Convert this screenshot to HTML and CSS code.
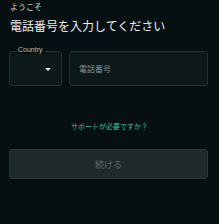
FILE: index.html
```html
<!DOCTYPE html>
<html lang="ja">
<head>
<meta charset="utf-8">
<link rel="stylesheet" href="styles.css">
</head>
<body>
<main class="page">
  <div class="welcome">ようこそ</div>
  <h1 class="title">電話番号を入力してください</h1>
  <div class="fields">
    <div class="field country">
      <span class="label">Country</span>
      <svg class="arrow" width="6" height="3" viewBox="0 0 6 3"><path d="M0 0H6L3 3Z" fill="#e6e6e6"/></svg>
    </div>
    <div class="field phone">
      <span class="placeholder">電話番号</span>
    </div>
  </div>
  <a class="support">サポートが必要ですか？</a>
  <button class="continue">続ける</button>
</main>
</body>
</html>
```
FILE: styles.css
```css
html, body {
  margin: 0;
  padding: 0;
  background: #061012;
  width: 219px;
  height: 224px;
  overflow: hidden;
}
.page {
  display: flex;
  flex-direction: column;
  padding: 2px 11px 0 9px;
  font-family: "Noto Sans CJK JP", "Liberation Sans", sans-serif;
}
.welcome {
  font-size: 8px;
  line-height: 10px;
  color: #d8dcdc;
  margin-left: 1px;
}
.title {
  margin: 7px 0 0 1px;
  font-size: 12px;
  line-height: 14px;
  font-weight: 400;
  color: #eceeee;
}
.fields {
  display: flex;
  gap: 7px;
  margin-top: 18px;
}
.field {
  position: relative;
  height: 33px;
  border: 1px solid #252f2f;
  border-radius: 3px;
  background: #0d1818;
  box-sizing: content-box;
  display: flex;
  align-items: center;
}
.country {
  width: 51px;
  justify-content: flex-end;
}
.arrow {
  margin-right: 10px;
  margin-top: 1px;
}
.label {
  position: absolute;
  left: 6px;
  top: -6px;
  padding: 0 2px;
  background: #061012;
  font-family: "Liberation Sans", sans-serif;
  font-size: 7px;
  line-height: 8px;
  color: #b8c0c0;
}
.phone {
  flex: 1;
}
.placeholder {
  margin-left: 9px;
  font-size: 8px;
  color: #8a9494;
}
.support {
  align-self: center;
  margin-top: 35px;
  font-size: 7px;
  line-height: 10px;
  color: #3fbf9f;
  margin-left: 2px;
}
.continue {
  margin-top: 18px;
  height: 30px;
  border: 1px solid #2a3635;
  border-radius: 3px;
  background: #1e2a29;
  color: #5e6b6a;
  font-family: "Noto Sans CJK JP", sans-serif;
  font-size: 9px;
  padding: 0;
}
```
